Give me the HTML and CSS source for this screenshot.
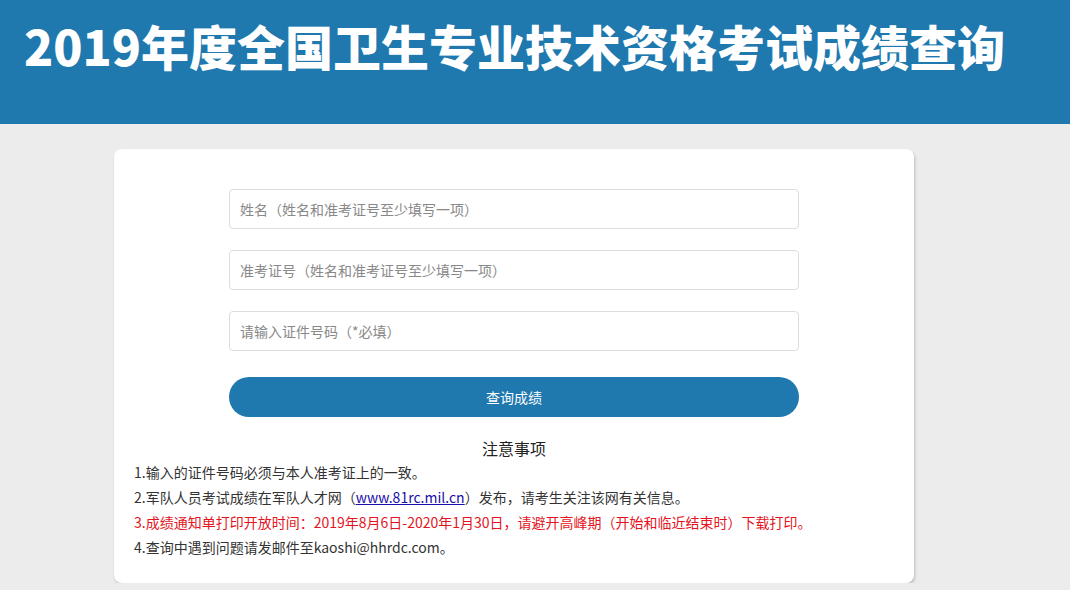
FILE: index.html
```
<!DOCTYPE html>
<html lang="zh-CN">
<head>
    <meta charset="UTF-8">
    <title>2019年度全国卫生专业技术资格考试成绩查询</title>
    <link rel="stylesheet" href="styles.css">
</head>
<body>
    <!-- 顶部标题 -->
    <div class="header">
        <h1>2019年度全国卫生专业技术资格考试成绩查询</h1>
    </div>
    <!-- 查询框 -->
    <div class="box">
        <form class="form">
            <input class="ipt" type="text" placeholder="姓名（姓名和准考证号至少填写一项）">
            <input class="ipt" type="text" placeholder="准考证号（姓名和准考证号至少填写一项）">
            <input class="ipt" type="text" placeholder="请输入证件号码（*必填）">
            <button class="btn" type="button">查询成绩</button>
        </form>
        <div class="notice">
            <h3>注意事项</h3>
            <p>1.输入的证件号码必须与本人准考证上的一致。</p>
            <p>2.军队人员考试成绩在军队人才网（<a href="javascript:;">www.81rc.mil.cn</a>）发布，请考生关注该网有关信息。</p>
            <p class="red">3.成绩通知单打印开放时间：2019年8月6日-2020年1月30日，请避开高峰期（开始和临近结束时）下载打印。</p>
            <p>4.查询中遇到问题请发邮件至kaoshi@hhrdc.com。</p>
        </div>
    </div>
</body>
</html>
```

FILE: styles.css
```
*{
    margin: 0;
    padding: 0;
    box-sizing: border-box;
}
body{
    background: #ececec;
    font-family: "Noto Sans CJK SC", "Microsoft YaHei", sans-serif;
    color: #333;
}
.header{
    height: 124px;
    background: #1f78ae;
    padding: 0 24px;
}
.header h1{
    color: #fff;
    font-size: 48px;
    font-weight: 900;
    line-height: 90px;
    white-space: nowrap;
}
.box{
    width: 800px;
    margin: 25px 0 0 114px;
    background: #fff;
    border-radius: 8px;
    box-shadow: 1px 2px 3px rgba(0,0,0,.2);
    padding: 40px 20px 23px;
}
.form{
    width: 570px;
    margin: 0 auto;
    display: flex;
    flex-direction: column;
    gap: 21px;
}
.ipt{
    height: 40px;
    border: 1px solid #ddd;
    border-radius: 4px;
    padding: 0 10px;
    font-size: 14px;
    font-family: inherit;
    outline: none;
}
.ipt::placeholder{
    color: #888;
}
.btn{
    height: 40px;
    margin-top: 5px;
    border: none;
    border-radius: 20px;
    background: #1f78ae;
    color: #fff;
    font-size: 14px;
    font-family: inherit;
}
.notice{
    margin-top: 19px;
    font-size: 14px;
}
.notice h3{
    text-align: center;
    font-size: 16px;
    font-weight: normal;
    line-height: 24px;
    color: #222;
}
.notice p{
    line-height: 25px;
    white-space: nowrap;
}
.notice a{
    color: #1a0dab;
}
.notice .red{
    color: #e4141e;
}
```
